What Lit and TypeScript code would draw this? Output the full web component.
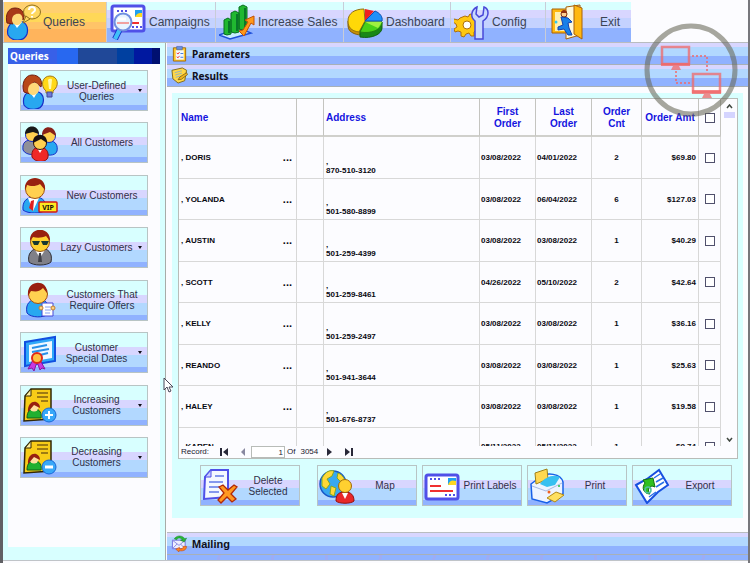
import { LitElement, html, svg, css, nothing } from "lit";
import { customElement, property } from "lit/decorators.js";

const O = "#1830c8";

const ICONS: Record<string, unknown> = {
  woman: svg`
    <path d="M3 31c-2-8 3-14 10-14s12 5 10 13c-3 8-16 8-20 1z" fill="#28a8f0" stroke="${O}" stroke-width="1.2"/>
    <path d="M8 18l5 7 5-7z" fill="#fff"/>
    <path d="M2 19C0 11 3 2 12 2s12 7 9 14l-6-7c-5 1-8 6-7 12z" fill="#a83818" stroke="#702010"/>
    <path d="M8 16c0-5 4-8 9-7 4 2 4 11-3 12-4 0-6-2-6-5z" fill="#ffd878"/>`,
  queries: svg`
    <path d="M3 31c-2-8 3-14 10-14s11 5 9 13c-3 8-15 8-19 1z" fill="#28a8f0" stroke="${O}" stroke-width="1.2"/>
    <path d="M8 18l4 6 5-6z" fill="#fff"/>
    <path d="M2 19C0 11 3 4 10 4s11 6 8 12l-5-6c-4 1-6 5-5 10z" fill="#a83818" stroke="#702010"/>
    <path d="M7 16c0-5 4-7 8-6 4 2 3 10-2 11-4 0-6-2-6-5z" fill="#ffd878"/>
    <ellipse cx="27" cy="8" rx="8.5" ry="7" fill="#ffd860" stroke="#907020"/>
    <path d="M21 12l-3 7 7-4z" fill="#ffd860" stroke="#907020"/>
    <path d="M24 6c0-4 6-4 6 0 0 2-3 2-3 4M27 12v1.500" fill="none" stroke="#fff" stroke-width="2"/>`,
  card: svg`
    <rect x="2" y="7" width="32" height="24" rx="2" fill="#fff" stroke="#5050e8" stroke-width="3"/>
    <path d="M6 11h10M21 27h10" stroke="#5050e8" stroke-width="2" stroke-dasharray="2 2"/>
    <path d="M6 18h11M6 23h23" stroke="#f03030" stroke-width="2"/>
    <path d="M24 10h8v7h-8z" fill="#20a0f0"/><path d="M24 17c2-5 4-5 8-4v4z" fill="#ffd820"/>`,
  campaigns: svg`
    <rect x="2" y="2" width="32" height="25" rx="2" fill="#fff" stroke="#5050e8" stroke-width="3"/>
    <path d="M7 7h10M22 23h10" stroke="#5050e8" stroke-width="2" stroke-dasharray="2 2"/>
    <path d="M20 19h9" stroke="#f03030" stroke-width="2"/>
    <path d="M25 6h7v7h-7z" fill="#20a0f0"/><path d="M25 13c2-4 4-4 7-4v4z" fill="#ffd820"/>
    <path d="M10 25L5 35" stroke="${O}" stroke-width="6"/><path d="M10 25L5 35" stroke="#40c0f8" stroke-width="4"/>
    <circle cx="13" cy="18" r="8.500" fill="#e8f4ff" stroke="#7090e0" stroke-width="2"/>
    <path d="M7 19h12" stroke="#f0a0a0" stroke-width="2"/><path d="M8 15h8" stroke="#fff" stroke-width="3"/>`,
  bars: svg`
    <path d="M0 31l20-7 12 5-21 6z" fill="#c8ecff" stroke="#2050d8" stroke-width="1.500"/>
    <path d="M5 16l4-2 3 2v14l-4 1-3-1zM12 9l4-2 4 2v19l-4 1-4-1zM20 3l4-2 4 2v22l-4 1-4-1z" fill="#20b830" stroke="#087020"/>
    <path d="M10 17v12M18 10v17M26 4v20" stroke="#087828" stroke-width="2"/>
    <path d="M20 27l5 5 7-13 3 2v-9l-9 4 3 2-5 8z" fill="#ff9818" stroke="#c05008"/>`,
  pie: svg`
    <path d="M1 17v5c0 8 12 9 12 9l2-9z" fill="#c89008" stroke="#806010"/>
    <path d="M13 25v8c12 2 22-3 22-9v-6z" fill="#188818" stroke="#106010"/>
    <path d="M18 17L12 28C4 27 1 23 1 17 1 9 8 5 17 5z" fill="#ffd808" stroke="#907010"/>
    <path d="M18 17V5l9 2z" fill="#f02020"/>
    <path d="M18 17l10-10c5 2 8 6 7 10z" fill="#2090f8" stroke="#1050b0"/>
    <path d="M18 18h17c0 8-11 12-22 10z" fill="#48d018" stroke="#208010"/><path d="M18 18h17l-4 6z" fill="#a0f040"/>`,
  config: svg`
    <path d="M11 12l3 1 2-3 3 1v3l3 1 3-1 1 3-3 2v3l3 2-1 3-3-1-2 2v4l-3 0-2-3-3 1-2 3-3-1v-4l-3-1-3 1-1-3 3-2-1-3-3-2 1-3 4 1 2-2z" fill="#ffc810" stroke="#b07008"/>
    <circle cx="13" cy="21" r="4" fill="#fff" stroke="#b07008"/>
    <path d="M21 35V17c-5-4-4-11 2-14l-1 7 3 3 4-2 1-8c5 2 6 9-1 14v18z" fill="#c8d8ff" stroke="#4848d8" stroke-width="1.500"/>`,
  exit: svg`
    <path d="M2 5h17v24H2z" fill="#ffb810" stroke="#a86008"/><path d="M5 8h12v19H5z" fill="#fff0b0"/>
    <path d="M16 3l14-2v30l-14 4z" fill="#fff8d8" stroke="#a86008"/>
    <path d="M24 1l8 3v31l-8-5z" fill="#ffb810" stroke="#a86008"/>
    <circle cx="14" cy="10" r="3" fill="#ffd090" stroke="#803010"/><path d="M11 9c0-4 6-4 6 0z" fill="#903010"/>
    <path d="M11 13l7 1 4 4-4 1 1 5 3 7h-4l-4-6-6 1v-3l5-2z" fill="#1880e8" stroke="#1040b0"/>
    <circle cx="6" cy="18" r="1.500" fill="#30c8f0"/>`,
  bulb: svg`
    <path d="M2 32c-2-8 2-14 9-14s12 4 10 12c-2 8-15 8-19 2z" fill="#28a8f0" stroke="${O}" stroke-width="1.2"/>
    <path d="M7 18l5 7 4-7z" fill="#fff"/>
    <path d="M2 19C-1 11 3 2 10 2s11 5 9 12l-6-5c-4 1-6 6-5 12z" fill="#b84818" stroke="#702010"/>
    <path d="M6 17c0-5 4-8 8-7 5 2 4 11-2 12-4 0-6-2-6-5z" fill="#ffd878"/>
    <path d="M24 18c-6-5-4-15 4-15s10 10 3 15v2h-7z" fill="#ffd818" stroke="#a07818"/>
    <path d="M26 7c2-2 4-1 4 0l-1 9h-2z" fill="#fff8b0"/><path d="M25 19h5v5h-5z" fill="#7078d8" stroke="#404898"/>`,
  group: svg`
    <path d="M1 25c-1-8 3-10 9-10s8 4 7 10-13 6-16 0z" fill="#909098" stroke="${O}"/>
    <path d="M20 26c-1-7 2-10 8-10s8 5 7 10-12 6-15 0z" fill="#28a8f0" stroke="${O}"/>
    <circle cx="10" cy="10" r="6.500" fill="#ffd050" stroke="${O}"/><path d="M3 9c0-10 14-10 14 0l-6-2z" fill="#181818"/>
    <circle cx="27" cy="11" r="6.500" fill="#ffd050" stroke="${O}"/><path d="M20 10c0-11 14-10 14 1l-6-4z" fill="#882018"/>
    <path d="M10 32c-1-7 3-10 8-10s9 4 8 10-13 6-16 0z" fill="#f02828" stroke="#901010"/>
    <path d="M15 23l3 5 3-5z" fill="#fff"/>
    <circle cx="18" cy="18" r="6.500" fill="#ffd050" stroke="#301010"/><path d="M11 18c-1-11 15-11 14 0l-6-4z" fill="#181010"/>`,
  vip: svg`
    <path d="M1 33c-1-9 4-13 12-13s12 5 11 13c-5 4-18 4-23 0z" fill="#28a8f0" stroke="${O}"/>
    <path d="M6 21l5 13 6-13z" fill="#fff"/><path d="M9 24l3-1-1 11-4-3z" fill="#e02020"/>
    <circle cx="13" cy="12" r="9.500" fill="#ffd050" stroke="#a05010"/><path d="M3 13C1-3 25-3 23 13l-5-6c-5 3-10 2-13 1z" fill="#982010"/>
    <rect x="17" y="25" width="18" height="10" rx="1" fill="#ffe820" stroke="#d01818" stroke-width="1.500"/>
    <text x="26" y="33" text-anchor="middle" class="tag">VIP</text>`,
  lazy: svg`
    <path d="M7 32c-2-8 3-14 11-14s13 5 11 14c-4 4-18 4-22 0z" fill="#808088" stroke="#303038"/>
    <path d="M13 20l5 8 5-8z" fill="#fff"/><path d="M17 23h2l1 9h-4z" fill="#404048"/>
    <circle cx="18" cy="12" r="9.500" fill="#ffd030" stroke="#905010"/><path d="M8 11C7-4 29-4 28 11l-4-5c-4 2-9 2-13 1z" fill="#982010"/>
    <path d="M10 11h8l-2 4h-4zM19 11h8l-2 4h-4z" fill="#183830"/>`,
  offers: svg`
    <path d="M5 31c-2-9 3-14 11-14s12 5 10 15c-4 4-17 4-21-1z" fill="#28a8f0" stroke="${O}"/>
    <circle cx="16" cy="12" r="9.500" fill="#ffd050" stroke="#a05010"/><path d="M6 14C4-3 26-3 25 11l-4-5c-5 5-9 3-12 3z" fill="#982010"/>
    <path d="M20 21h11v13H20z" fill="#fff" stroke="#4848d8"/><path d="M23 25h6M23 28h6M23 31h5" stroke="#88a0f0"/>
    <circle cx="19" cy="26" r="2" fill="#ffd080" stroke="#c08030"/><circle cx="31" cy="26" r="2" fill="#ffd080" stroke="#c08030"/>`,
  cert: svg`
    <path d="M3 7l30-5v24L3 31z" fill="#30a8f8" stroke="#1050e0" stroke-width="2"/>
    <path d="M7 10l23-4v17L7 27z" fill="#f0f8ff"/><path d="M10 13l15-3M10 17l17-3M14 21l12-3" stroke="#2890e8" stroke-width="2"/>
    <path d="M11 25l-5 9 4-1 2 3 3-9 3 8 2-2 3 1-5-9z" fill="#c838e0" stroke="#8818a0"/>
    <circle cx="15" cy="23" r="5" fill="#ffc040" stroke="#e02818" stroke-width="2"/>`,
  inc: svg`
    <path d="M9 2h20v30l-27 2 1-25z" fill="#f8cc18" stroke="#302808" stroke-width="1.500"/><path d="M9 2v7H3z" fill="#fff0a0" stroke="#302808"/>
    <path d="M15 6h11M15 10h11M19 14h7" stroke="#806010" stroke-width="1.500"/>
    <path d="M5 31c0-7 3-9 8-9s7 5 6 9z" fill="#20b030" stroke="#106018"/><circle cx="12" cy="20" r="4.500" fill="#ffe0a0"/><path d="M6 25c-1-13 12-13 12-4l-6-3z" fill="#982010"/>
    <circle cx="27" cy="28" r="7" fill="#38a8f8" stroke="#1868d8"/><path d="M23 28h8M27 24v8" stroke="#fff" stroke-width="2"/>`,
  dec: svg`
    <path d="M9 2h20v30l-27 2 1-25z" fill="#f8cc18" stroke="#302808" stroke-width="1.500"/><path d="M9 2v7H3z" fill="#fff0a0" stroke="#302808"/>
    <path d="M15 6h11M15 10h11M19 14h7" stroke="#806010" stroke-width="1.500"/>
    <path d="M5 31c0-7 3-9 8-9s7 5 6 9z" fill="#20b030" stroke="#106018"/><circle cx="12" cy="20" r="4.500" fill="#ffe0a0"/><path d="M6 25c-1-13 12-13 12-4l-6-3z" fill="#982010"/>
    <circle cx="27" cy="28" r="7" fill="#38a8f8" stroke="#1868d8"/><path d="M23 28h8" stroke="#fff" stroke-width="3"/>`,
  delete: svg`
    <path d="M9 2h17v27l-24 2 1-22z" fill="#f4f8ff" stroke="#5050e8" stroke-width="2"/><path d="M9 2v7H3z" fill="#c8d0ff" stroke="#5050e8"/>
    <path d="M13 8h9M7 14h14M7 19h11M7 24h10" stroke="#6078e8" stroke-width="1.500"/>
    <path d="M17 19l4-2 5 5 6-5 3 2-6 7 5 5-4 3-5-5-6 6-3-3 6-7z" fill="#ff9820" stroke="#b02808" stroke-width="1.300"/>`,
  map: svg`
    <circle cx="14" cy="16" r="13" fill="#38a8f0" stroke="#1858c8" stroke-width="1.500"/>
    <path d="M3 10c4-7 8-8 12-7l-2 5-5 3 3 5-4 5-4-3zM19 5c5 2 7 6 7 10l-5-2-3-3zM12 18l5 2-2 8-4-2z" fill="#ffd838" stroke="#88a820"/>
    <path d="M17 33c0-7 3-9 9-9s9 3 9 9c-3 3-15 3-18 0z" fill="#e82828" stroke="#901010"/><path d="M23 25l3 6 3-6z" fill="#fff"/>
    <circle cx="26" cy="18" r="6.500" fill="#ffd030" stroke="#a06808"/>`,
  print: svg`
    <path d="M2 16l8-6c8-7 22-4 24 4v12l-16 9L3 31z" fill="#eef4ff" stroke="#1860e8" stroke-width="1.500"/>
    <path d="M6 5l12-4 1 10-12 5z" fill="#ffd850" stroke="#a08018"/><path d="M11 16c5-7 13-10 20-7l-5 8-8 2z" fill="#38c0f0"/>
    <path d="M3 18l14 5 16-8" fill="none" stroke="#a8b8e0"/><path d="M18 30l9-6 8 3-9 7z" fill="#ffe060" stroke="#b08818"/>
    <circle cx="20" cy="24" r="1.500" fill="#f06020"/><circle cx="30" cy="18" r="1" fill="#20c040"/>`,
  export: svg`
    <path d="M2 17l11-6 12-9 9 15-10 7-11 11z" fill="#fff" stroke="#1850e0" stroke-width="2"/>
    <path d="M20 10l6-4M22 14l7-4M22 19l8-5M15 29l7-5" stroke="#2870e8" stroke-width="1.500" fill="none"/>
    <path d="M9 12l10-2 2 9-3-1c-3 1-5 4-2 8-6 0-9-6-5-11z" fill="#30c020" stroke="#107010"/>
    <circle cx="14" cy="22" r="3" fill="none" stroke="#50c0a0" stroke-width="1.500"/>`,
  clip: svg`
    <path d="M5 6h26v28H5z" fill="#ffc828" stroke="#a06808" stroke-width="2"/><path d="M10 11h17v20H10z" fill="#f0f8ff"/>
    <path d="M12 3h12v7H12z" fill="#6890e0" stroke="#3050a0"/><path d="M12 17l3 2 3-4M12 25l3 2 3-4" stroke="#f03030" stroke-width="2" fill="none"/>
    <path d="M20 18h6M20 26h6" stroke="#3878e0" stroke-width="2"/>`,
  results: svg`
    <path d="M2 7l22-5 9 5-4 22-14 5L4 25z" fill="#ffd848" stroke="#806818" stroke-width="2"/>
    <path d="M8 12l15-4M9 17l14-4M10 22l10-3" stroke="#90b0c0" stroke-width="2"/><path d="M15 27l4-6 14-9 2 4-13 10z" fill="#f0b820" stroke="#705010" stroke-width="1.500"/>`,
  mail: svg`
    <path d="M3 11h27v18H3z" fill="#eeeeff" stroke="#7070e0" stroke-width="2"/><path d="M3 11l14 11 13-11M3 29l10-10M30 29L20 19" fill="none" stroke="#8888e0" stroke-width="2"/>
    <path d="M7 8c6-9 18-7 22 0l4-1-5 8-8-4 4-1c-4-5-10-4-12 0z" fill="#28b838" stroke="#107020"/>
    <path d="M33 24c0 9-9 11-16 9v3l-7-6 8-4v3c5 1 8-1 8-5z" fill="#ff8020" stroke="#b04010"/>`,
};

@customElement("ui-icon")
export class UiIcon extends LitElement {
  @property() name = "";
  static styles = css`
    :host { display: block; width: 36px; height: 36px; flex: none; }
    svg { display: block; width: 100%; height: 100%; }
    .tag { font: bold 7px "Noto Sans", sans-serif; fill: #201008; }
  `;
  render() {
    return html`<svg viewBox="0 0 36 36" aria-hidden="true">${ICONS[this.name] ?? nothing}</svg>`;
  }
}

@customElement("band-button")
export class BandButton extends LitElement {
  @property() icon = "";
  @property() label = "";
  @property({ type: Boolean }) menu = false;
  static styles = css`
    :host { display: block; }
    button {
      display: flex; align-items: center; box-sizing: border-box; width: 100%; height: 41px;
      margin: 0; padding: 0 1px; border: 1px solid #b8c4c4; color: #303048;
      font: 10px/11px "Liberation Sans", Arial, sans-serif;
      background: linear-gradient(#d8ffff 14px, #d8d6ff 14px 22px, #b2d8ff 22px 34px, #90b2ff 34px);
    }
    .label { flex: 1; text-align: center; white-space: pre-line; }
    .arrow { flex: none; margin: 0 4px 0 3px; border: 2px solid transparent; border-top: 3px solid #101018; border-bottom: 0; }
  `;
  render() {
    return html`<button type="button">
      <ui-icon name=${this.icon}></ui-icon><span class="label">${this.label}</span>
      ${this.menu ? html`<span class="arrow"></span>` : nothing}
    </button>`;
  }
}

const TABS = [
  ["queries", "Queries", "w-queries"],
  ["campaigns", "Campaigns", "w-campaigns"],
  ["bars", "Increase Sales", "w-sales"],
  ["pie", "Dashboard", "w-dashboard"],
  ["config", "Config", "w-config"],
  ["exit", "Exit", "w-exit"],
];

const QUERIES: [string, string, boolean][] = [
  ["bulb", "User-Defined\nQueries", true],
  ["group", "All Customers", false],
  ["vip", "New Customers", false],
  ["lazy", "Lazy Customers", true],
  ["offers", "Customers That\nRequire Offers", false],
  ["cert", "Customer\nSpecial Dates", true],
  ["inc", "Increasing\nCustomers", true],
  ["dec", "Decreasing\nCustomers", true],
];

const ACTIONS = [
  ["delete", "Delete\nSelected"],
  ["map", "Map"],
  ["card", "Print Labels"],
  ["print", "Print"],
  ["export", "Export"],
];

const ROWS = [
  ["DORIS", "870-510-3120", "03/08/2022", "04/01/2022", "2", "$69.80"],
  ["YOLANDA", "501-580-8899", "03/08/2022", "06/04/2022", "6", "$127.03"],
  ["AUSTIN", "501-259-4399", "03/08/2022", "03/08/2022", "1", "$40.29"],
  ["SCOTT", "501-259-8461", "04/26/2022", "05/10/2022", "2", "$42.64"],
  ["KELLY", "501-259-2497", "03/08/2022", "03/08/2022", "1", "$36.16"],
  ["REANDO", "501-941-3644", "03/08/2022", "03/08/2022", "1", "$25.63"],
  ["HALEY", "501-676-8737", "03/08/2022", "03/08/2022", "1", "$19.58"],
  ["KAREN", "", "05/11/2022", "05/11/2022", "1", "$9.74"],
];

@customElement("app-root")
export class AppRoot extends LitElement {
  static styles = css`
    :host { display: block; font: 10px/12px "Liberation Sans", Arial, sans-serif; color: #202030; }
    button { font: inherit; color: inherit; margin: 0; padding: 0; border: 0; background: none; }
    .app {
      position: relative; box-sizing: border-box; height: 100vh; min-height: 540px; padding: 2px 0;
      display: flex; flex-direction: column; background: #fcfcff;
      border-left: 3px solid #606064; border-right: 2px solid #77777c;
    }
    .tools { display: flex; flex: none; height: 40px; border-bottom: 1px solid #b8bcc0; }
    .tab {
      display: flex; align-items: center; gap: 3px; box-sizing: border-box; padding-left: 3px;
      font-size: 12px; color: #3c4454; border-left: 1px solid #c8ccd8;
      background: linear-gradient(#d8ffff 8px, #d8d6ff 8px 16px, #c4d2ff 16px 26px, #90b2ff 26px);
    }
    .tab span { white-space: nowrap; }
    .w-queries { width: 103px; padding-left: 1px; gap: 2px; background: linear-gradient(#ffd070 11px, #ffd858 11px 20px, #ffc468 20px 27px, #ffb45c 27px); }
    .w-campaigns { width: 109px; }
    .w-sales { width: 128px; }
    .w-dashboard { width: 107px; }
    .w-config { width: 95px; gap: 2px; }
    .w-exit { width: 86px; padding-left: 4px; }
    .w-exit span { flex: 1; }
    .main { flex: 1; min-height: 0; display: flex; border-bottom: 1px solid #c0c4c8; }
    .side {
      flex: none; box-sizing: border-box; width: 163px; padding: 5px 5px 13px; background: #d8ffff;
      border-right: 1px solid #a8aca8; display: flex; flex-direction: column;
    }
    h2, h3 { margin: 0; font: bold 10px/16px "Noto Sans", sans-serif; }
    .side h2 {
      height: 16px; padding-left: 2px; color: #fff;
      background: linear-gradient(90deg, #3860e8 32%, #2868f0 32% 46%, #204898 46% 72%, #0040a0 72% 83%, #0018a0 83% 95%, #001070 95%);
    }
    .list {
      flex: 1; display: flex; flex-direction: column; justify-content: space-between;
      padding: 6px 12px 69px; background: #fcfcff;
    }
    .work { flex: 1; min-width: 0; display: flex; flex-direction: column; margin-left: 1px; }
    .bar {
      flex: none; display: flex; align-items: center; gap: 4px; box-sizing: border-box; height: 22px; padding-left: 4px;
      border-bottom: 1px solid #a8b0b8; color: #101020;
      background: linear-gradient(#d8d6ff 4px, #b2d8ff 4px 13px, #90b2ff 13px);
    }
    .bar ui-icon { width: 17px; height: 17px; }
    .mailing { border-top: 1px solid #b8bcc0; height: 23px; }
    .mailing h3 { font: bold 11px/16px "Liberation Sans", Arial, sans-serif; }
    .strip { flex: none; height: 5px; background: #90b2ff repeating-linear-gradient(100deg, transparent 0 50px, #9cacf6 50px 53px); }
    .panel {
      flex: 1; min-height: 0; display: flex; flex-direction: column;
      margin: 6px 5px 14px; padding: 5px 5px 12px 6px; background: #d8ffff;
    }
    .grid { flex: 1; min-height: 0; display: flex; flex-direction: column; border: 1px solid #b8bcb8; background: #fcfcff; }
    .scroll { flex: 1; min-height: 0; display: flex; overflow: hidden; }
    .rows { flex: 1; min-width: 0; overflow: hidden; }
    table { width: 100%; table-layout: fixed; border-collapse: separate; border-spacing: 0; }
    .c-name { width: 118px; } .c-gap { width: 27px; } .c-date { width: 56px; }
    .c-cnt { width: 50px; } .c-amt { width: 57px; } .c-tick { width: 22px; }
    th {
      height: 34px; padding: 2px 2px 0; border-bottom: 2px solid #d0d0cc; color: #1414e0;
      font: bold 10px/12px "Liberation Sans", Arial, sans-serif; border-right: 1px solid #c4c4c0;
    }
    th.left { text-align: left; }
    th.wrap { padding: 2px 8px 0; }
    td {
      box-sizing: border-box; height: 41px; padding: 0 2px; border-right: 1px solid #d8d8d8; border-bottom: 1px solid #d8d8d8;
      font: bold 8px/9px "Liberation Sans", Arial, sans-serif; color: #080810; text-align: center;
    }
    tr:nth-child(odd) td { height: 42px; }
    tbody tr:last-child td { height: 38px; }
    td.addr { text-align: left; vertical-align: bottom; padding-bottom: 3px; white-space: pre-line; }
    td.date { text-align: left; padding-left: 1px; }
    td.amt { text-align: right; }
    .name { display: flex; justify-content: space-between; align-items: center; padding-right: 2px; }
    .name button { font-size: 11px; line-height: 9px; }
    input[type="checkbox"] {
      appearance: none; display: block; box-sizing: border-box; width: 10px; height: 10px; margin: 0 auto;
      border: 1px solid #50506c; background: #fff;
    }
    .track { flex: none; width: 16px; display: flex; flex-direction: column; align-items: center; padding: 5px 0 4px; box-sizing: border-box; }
    .track svg { width: 7px; height: 5px; flex: none; }
    .thumb { width: 11px; height: 6px; margin-top: 3px; background: #d4d4ff; }
    .space { flex: 1; }
    .nav { flex: none; display: flex; align-items: center; height: 12px; padding-left: 2px; font-size: 8px; line-height: 10px; gap: 11px; }
    .nav button { display: block; width: 8px; height: 8px; }
    .nav svg { display: block; width: 8px; height: 8px; fill: #282838; }
    .nav .dim svg { fill: #8888a0; }
    .nav label { display: flex; align-items: center; gap: 2px; margin-left: -7px; }
    .nav input {
      box-sizing: border-box; width: 34px; height: 12px; padding: 0 1px; border: 1px solid #b8bcb8; background: #fff;
      font: inherit; color: inherit; text-align: right;
    }
    .total { margin: 0 -3px 0 -6px; }
    .actions { flex: none; display: flex; justify-content: flex-end; gap: 5px; padding: 6px 6px 0 0; }
    .actions band-button { width: 100px; }
    .actions band-button:first-child { margin-right: 12px; }
    .badge { position: absolute; right: 10px; top: 23px; width: 94px; height: 94px; pointer-events: none; }
    .cursor { position: absolute; left: 160px; top: 377px; width: 11px; height: 16px; pointer-events: none; }
  `;

  private tick(label: string) {
    return html`<input type="checkbox" aria-label=${label} />`;
  }

  private navButton(label: string, path: string, cls = "") {
    return html`<button type="button" class=${cls} aria-label=${label}><svg viewBox="0 0 8 8"><path d=${path} /></svg></button>`;
  }

  render() {
    return html`<div class="app">
      <nav class="tools">
        ${TABS.map(([icon, label, cls]) => html`<button type="button" class="tab ${cls}"><ui-icon name=${icon}></ui-icon><span>${label}</span></button>`)}
      </nav>
      <div class="main">
        <aside class="side">
          <h2>Queries</h2>
          <div class="list">
            ${QUERIES.map(([icon, label, menu]) => html`<band-button .icon=${icon} .label=${label} .menu=${menu}></band-button>`)}
          </div>
        </aside>
        <main class="work">
          <div class="bar"><ui-icon name="clip"></ui-icon><h3>Parameters</h3></div>
          <div class="bar"><ui-icon name="results"></ui-icon><h3>Results</h3></div>
          <section class="panel">
            <div class="grid">
              <div class="scroll">
                <div class="rows">
                  <table>
                    <colgroup>
                      <col class="c-name" /><col class="c-gap" /><col /><col class="c-date" /><col class="c-date" />
                      <col class="c-cnt" /><col class="c-amt" /><col class="c-tick" />
                    </colgroup>
                    <thead>
                      <tr>
                        <th class="left">Name</th><th></th><th class="left">Address</th>
                        <th class="wrap">First Order</th><th class="wrap">Last Order</th><th class="wrap">Order Cnt</th><th>Order&nbsp;Amt</th>
                        <th>${this.tick("Select all")}</th>
                      </tr>
                    </thead>
                    <tbody>
                      ${ROWS.map(([name, phone, first, last, cnt, amt]) => html`<tr>
                        <td><div class="name"><span>, ${name}</span><button type="button" aria-label="Details">...</button></div></td>
                        <td></td>
                        <td class="addr">${",\n" + phone}</td>
                        <td class="date">${first}</td>
                        <td class="date">${last}</td>
                        <td>${cnt}</td>
                        <td class="amt">${amt}</td>
                        <td>${this.tick("Select " + name)}</td>
                      </tr>`)}
                    </tbody>
                  </table>
                </div>
                <div class="track">
                  <svg viewBox="0 0 7 5"><path d="M1 4l2.500-3L6 4" fill="none" stroke="#404840" stroke-width="1.500" /></svg>
                  <div class="thumb"></div>
                  <div class="space"></div>
                  <svg viewBox="0 0 7 5"><path d="M1 1l2.500 3L6 1" fill="none" stroke="#404840" stroke-width="1.500" /></svg>
                </div>
              </div>
              <div class="nav">
                <span>Record:</span>
                ${this.navButton("First record", "M0 0h2v8H0zM8 0v8L3 4z")}
                ${this.navButton("Previous record", "M6 0v8L2 4z", "dim")}
                <label><input type="text" value="1" aria-label="Record number" />Of</label>
                <span class="total">3054</span>
                ${this.navButton("Next record", "M1 0v8l5-4z")}
                ${this.navButton("Last record", "M0 0v8l5-4zM6 0h2v8H6z")}
              </div>
            </div>
            <div class="actions">
              ${ACTIONS.map(([icon, label]) => html`<band-button .icon=${icon} .label=${label}></band-button>`)}
            </div>
          </section>
          <div class="bar mailing"><ui-icon name="mail"></ui-icon><h3>Mailing</h3></div>
          <div class="strip"></div>
        </main>
      </div>
      <svg class="badge" viewBox="0 0 94 94" aria-hidden="true">
        <circle cx="47" cy="47" r="44" fill="none" stroke="#686858" stroke-opacity="0.58" stroke-width="5" />
        <g fill="none" stroke="#f06868" stroke-opacity="0.75">
          <path d="M18 24h27v17H18z" stroke-width="2.500" />
          <path d="M49 51h27v18H49z" stroke-width="2.500" />
          <path d="M48 33h15v17M32 48v12h16" stroke-width="2" stroke-dasharray="2 2" />
        </g>
        <path d="M17 40h29v3H17zM29 43h6l2 4H27zM48 67h29v4H48zM60 71h6l2 4H58z" fill="#f06868" fill-opacity="0.75" />
      </svg>
      <svg class="cursor" viewBox="0 0 11 16" aria-hidden="true">
        <path d="M1 1v12l3-3 2 5 2-1-2-4h4z" fill="#fff" stroke="#484858" />
      </svg>
    </div>`;
  }
}
